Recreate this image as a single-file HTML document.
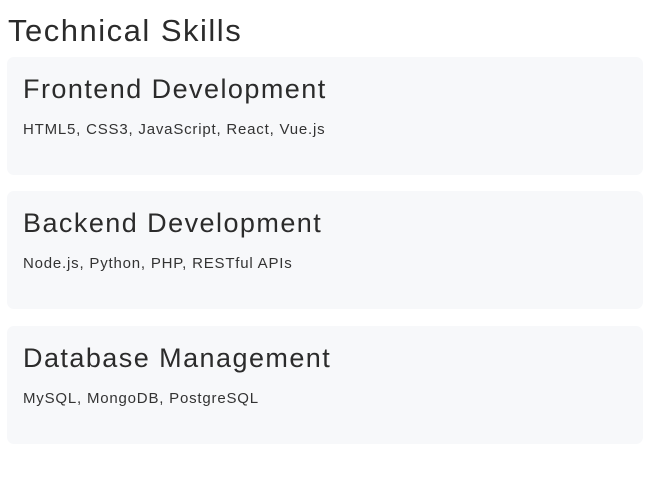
<!DOCTYPE html>
<html><head><style>
body{margin:0;background:#fff;font-family:"Liberation Sans",sans-serif;color:#2b2b2b;}
h2{position:absolute;left:8px;top:12px;margin:0;font-size:31px;font-weight:normal;line-height:38px;letter-spacing:1.5px;}
.card{position:absolute;left:7px;width:636px;height:118px;background:#f7f8fa;border-radius:7px;}
.card h3{position:absolute;left:16px;top:15px;margin:0;font-size:27px;font-weight:normal;line-height:34px;letter-spacing:1.45px;}
.card p{position:absolute;left:16px;top:63px;margin:0;font-size:15px;line-height:20px;color:#333;letter-spacing:0.8px;}
</style></head><body>
<h2>Technical Skills</h2>
<div class="card" style="top:57px"><h3>Frontend Development</h3><p>HTML5, CSS3, JavaScript, React, Vue.js</p></div>
<div class="card" style="top:191px"><h3>Backend Development</h3><p>Node.js, Python, PHP, RESTful APIs</p></div>
<div class="card" style="top:326px"><h3>Database Management</h3><p>MySQL, MongoDB, PostgreSQL</p></div>
</body></html>
